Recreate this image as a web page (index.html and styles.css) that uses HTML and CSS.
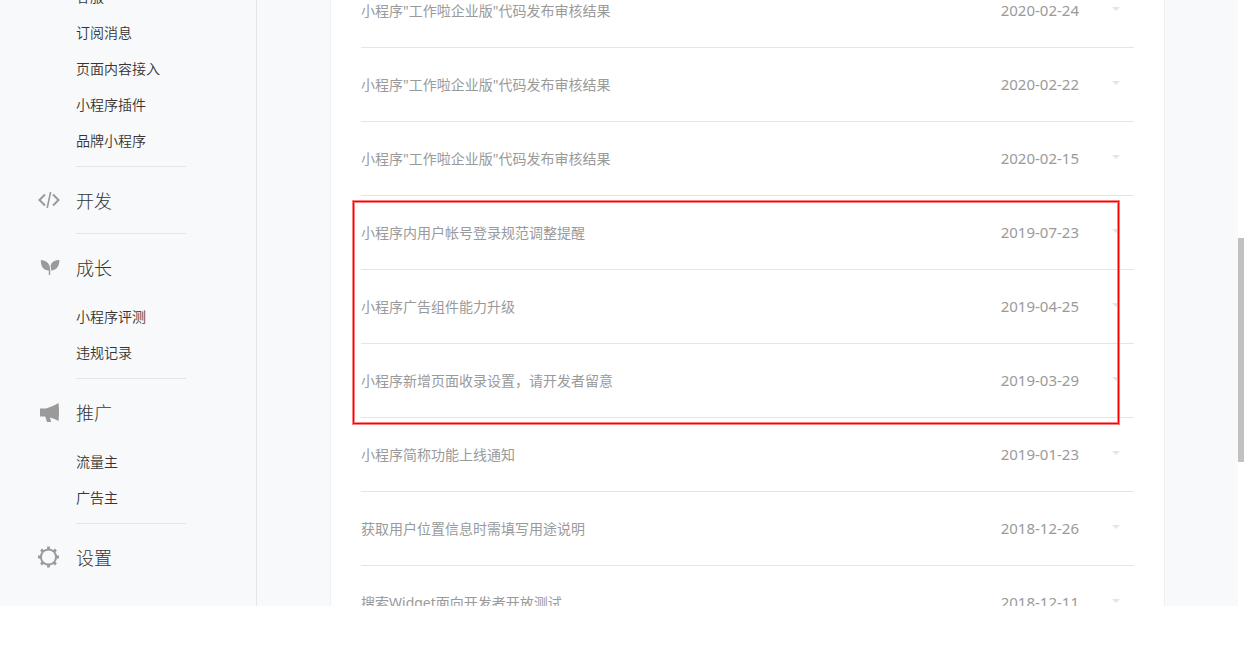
FILE: index.html
```
<!DOCTYPE html>
<html lang="zh-CN">
<head>
    <meta charset="UTF-8">
    <meta name="viewport" content="width=device-width, initial-scale=1.0">
    <title>通知中心</title>
    <link rel="stylesheet" href="styles.css">
</head>
<body>
    <div class="page">
        <nav class="sidebar">
            <div class="nav-section">
                <ul class="nav-list">
                    <li><a href="#">客服</a></li>
                    <li><a href="#">订阅消息</a></li>
                    <li><a href="#">页面内容接入</a></li>
                    <li><a href="#">小程序插件</a></li>
                    <li><a href="#">品牌小程序</a></li>
                </ul>
            </div>
            <div class="nav-section">
                <a class="nav-title" href="#">
                    <svg class="nav-icon" viewBox="0 0 22 22" fill="none" stroke="#9a9a9a" stroke-width="2">
                        <path d="M7 5.5L1.5 11L7 16.5M15 5.5L20.5 11L15 16.5"/>
                        <path d="M12.6 3L9.2 19" stroke-width="1.6"/>
                    </svg>
                    开发
                </a>
            </div>
            <div class="nav-section">
                <a class="nav-title" href="#">
                    <svg class="nav-icon" viewBox="0 0 22 22" fill="#9a9a9a">
                        <path d="M2.8 4C8 4 12 7.500 12.200 13.200V19H10.800V14.600C5.600 14.400 2.800 11 2.800 4Z"/>
                        <path d="M21.400 4C16.500 4 12.600 6.500 12.600 10.500C13 12 13.200 13 13.200 14.500C18.500 14 21.400 10.500 21.400 4Z"/>
                    </svg>
                    成长
                </a>
                <ul class="nav-list">
                    <li><a href="#">小程序评测</a></li>
                    <li><a href="#">违规记录</a></li>
                </ul>
            </div>
            <div class="nav-section">
                <a class="nav-title" href="#">
                    <svg class="nav-icon" viewBox="0 0 22 22" fill="#9a9a9a">
                        <path d="M2 7.500H8C13 6 17 4 20.500 2C21.200 8 21.200 14 20.500 20C18 18.500 15 17.200 12 16.500L13.200 21H9L7.200 15.500H2Z"/>
                    </svg>
                    推广
                </a>
                <ul class="nav-list">
                    <li><a href="#">流量主</a></li>
                    <li><a href="#">广告主</a></li>
                </ul>
            </div>
            <div class="nav-section">
                <a class="nav-title" href="#">
                    <svg class="nav-icon" viewBox="0 0 22 22" fill="none" stroke="#9a9a9a">
                        <circle cx="10.500" cy="11" r="7.600" stroke-width="2"/>
                        <path stroke-width="2.800" d="M10.500 0.500V3.500M10.500 18.500V21.500M0 11H3M18 11H21M3.100 3.600L5.200 5.700M15.800 16.300L17.900 18.400M3.100 18.400L5.200 16.300M15.800 5.700L17.900 3.600"/>
                    </svg>
                    设置
                </a>
            </div>
        </nav>

        <main class="content">
            <div class="card">
                <ul class="notice-list">
                    <li><button class="notice"><span class="notice-title">小程序"工作啦企业版"代码发布审核结果</span><time>2020-02-24</time><svg class="arrow" viewBox="0 0 8 8"><path d="M0 1H8L4 5Z"/></svg></button></li>
                    <li><button class="notice"><span class="notice-title">小程序"工作啦企业版"代码发布审核结果</span><time>2020-02-22</time><svg class="arrow" viewBox="0 0 8 8"><path d="M0 1H8L4 5Z"/></svg></button></li>
                    <li><button class="notice"><span class="notice-title">小程序"工作啦企业版"代码发布审核结果</span><time>2020-02-15</time><svg class="arrow" viewBox="0 0 8 8"><path d="M0 1H8L4 5Z"/></svg></button></li>
                </ul>
                <ul class="notice-list marked">
                    <li><button class="notice"><span class="notice-title">小程序内用户帐号登录规范调整提醒</span><time>2019-07-23</time><svg class="arrow" viewBox="0 0 8 8"><path d="M0 1H8L4 5Z"/></svg></button></li>
                    <li><button class="notice"><span class="notice-title">小程序广告组件能力升级</span><time>2019-04-25</time><svg class="arrow" viewBox="0 0 8 8"><path d="M0 1H8L4 5Z"/></svg></button></li>
                    <li><button class="notice"><span class="notice-title">小程序新增页面收录设置，请开发者留意</span><time>2019-03-29</time><svg class="arrow" viewBox="0 0 8 8"><path d="M0 1H8L4 5Z"/></svg></button></li>
                </ul>
                <ul class="notice-list">
                    <li><button class="notice"><span class="notice-title">小程序简称功能上线通知</span><time>2019-01-23</time><svg class="arrow" viewBox="0 0 8 8"><path d="M0 1H8L4 5Z"/></svg></button></li>
                    <li><button class="notice"><span class="notice-title">获取用户位置信息时需填写用途说明</span><time>2018-12-26</time><svg class="arrow" viewBox="0 0 8 8"><path d="M0 1H8L4 5Z"/></svg></button></li>
                    <li><button class="notice"><span class="notice-title">搜索Widget面向开发者开放测试</span><time>2018-12-11</time><svg class="arrow" viewBox="0 0 8 8"><path d="M0 1H8L4 5Z"/></svg></button></li>
                </ul>
            </div>
        </main>

        <div class="scrollbar">
            <div class="scrollbar-thumb"></div>
        </div>
    </div>
</body>
</html>
```
FILE: styles.css
```
* {
    margin: 0;
    padding: 0;
    box-sizing: border-box;
}

body {
    background: #fff;
    color: #353535;
    font-family: "Noto Sans", "Noto Sans CJK SC", sans-serif;
    font-size: 14px;
    overflow: hidden;
}

ul {
    list-style: none;
}

a {
    color: inherit;
    text-decoration: none;
}

.page {
    display: flex;
    height: calc(100vh - 42px);
    background: #f8f9fb;
    overflow: hidden;
}

/* left menu, scrolled part of the way down */
.sidebar {
    flex: none;
    width: 257px;
    padding-left: 38px;
    border-right: 1px solid #e4e5e8;
    overflow: hidden;
}

.sidebar .nav-section:first-child {
    margin-top: -20px;
}

.nav-section {
    width: 148px;
}

.nav-section::after {
    content: "";
    display: block;
    height: 1px;
    margin-left: 38px;
    background: #e4e5e8;
}

.nav-section:last-child::after {
    display: none;
}

.nav-title {
    display: flex;
    align-items: center;
    gap: 16px;
    height: 66px;
    font-size: 18px;
    font-weight: 300;
}

.nav-icon {
    width: 22px;
    height: 22px;
}

.nav-list {
    padding: 0 0 6px 38px;
}

.nav-list a {
    display: block;
    padding-bottom: 2px;
    font-weight: 350;
    line-height: 34px;
    white-space: nowrap;
}

.content {
    flex: 1;
    min-width: 0;
    padding: 0 73px;
}

.card {
    min-height: 100%;
    padding: 0 30px;
    background: #fff;
    border: 1px solid #eff0f2;
    border-width: 0 1px;
}

.card .notice-list:first-child {
    margin-top: -26px;
}

.notice {
    display: flex;
    align-items: center;
    width: 100%;
    height: 74px;
    padding: 0 14px 2px 0;
    background: none;
    border: none;
    border-bottom: 1px solid #e4e5e8;
    color: #9a9a9a;
    font: inherit;
    text-align: left;
    cursor: pointer;
}

.notice-title {
    flex: 1;
}

.notice time {
    font-size: 15px;
}

.arrow {
    width: 8px;
    height: 8px;
    margin-left: 33px;
    fill: #e4e5e8;
}

/* red frame around the three older notices */
.marked {
    position: relative;
}

.marked::after {
    content: "";
    position: absolute;
    top: 5px;
    right: 15px;
    bottom: -6px;
    left: -8px;
    border: 1px solid #f00;
    box-shadow: 0 0 0 1px #ff8080, inset 0 0 0 1px #ff8080;
    pointer-events: none;
}

.scrollbar {
    flex: none;
    width: 6px;
    padding-top: 238px;
    background: #fff;
}

.scrollbar-thumb {
    height: 224px;
    background: #c1c1c1;
}
```
